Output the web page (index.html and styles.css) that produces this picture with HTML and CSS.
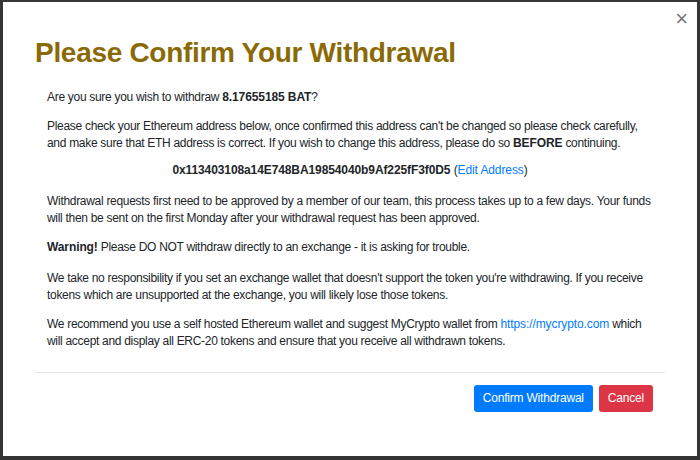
FILE: index.html
```html
<!DOCTYPE html>
<html lang="en">
<head>
  <meta charset="UTF-8">
  <title>Confirm Withdrawal</title>
  <link rel="stylesheet" href="styles.css">
</head>
<body>

<div class="modal">

  <!--关闭按钮-->
  <a class="close" href="javascript:;">&times;</a>

  <h2 class="title">Please Confirm Your Withdrawal</h2>

  <div class="content">
    <p class="first">Are you sure you wish to withdraw <b>8.17655185 BAT</b>?</p>
    <p>Please check your Ethereum address below, once confirmed this address can't be changed so please check carefully, and make sure that ETH address is correct. If you wish to change this address, please do so <b>BEFORE</b> continuing.</p>
    <p class="address"><b>0x113403108a14E748BA19854040b9Af225fF3f0D5</b> (<a href="#">Edit Address</a>)</p>
    <p class="short">Withdrawal requests first need to be approved by a member of our team, this process takes up to a few days. Your funds will then be sent on the first Monday after your withdrawal request has been approved.</p>
    <p><b>Warning!</b> Please DO NOT withdraw directly to an exchange - it is asking for trouble.</p>
    <p class="short">We take no responsibility if you set an exchange wallet that doesn't support the token you're withdrawing. If you receive tokens which are unsupported at the exchange, you will likely lose those tokens.</p>
    <p>We recommend you use a self hosted Ethereum wallet and suggest MyCrypto wallet from <a href="#">https://mycrypto.com</a> which will accept and display all ERC-20 tokens and ensure that you receive all withdrawn tokens.</p>
  </div>

  <!--底部按钮-->
  <div class="footer">
    <a class="btn btn-blue" href="javascript:;">Confirm Withdrawal</a>
    <a class="btn btn-red" href="javascript:;">Cancel</a>
  </div>
</div>

</body>
</html>
```

FILE: styles.css
```css
* {
  margin: 0;
  padding: 0;
  box-sizing: border-box;
}

body {
  background-color: #353535;
  font-family: "Liberation Sans", Arial, sans-serif;
  color: #212529;
}

.modal {
  position: relative;
  width: 694px;
  height: 454px;
  margin: 2px 3px;
  padding: 0 32px;
  background-color: #fff;
}

.close {
  position: absolute;
  top: 6px;
  right: 9px;
  font-size: 22px;
  line-height: 22px;
  color: #777;
  text-decoration: none;
}

.title {
  padding-top: 33px;
  padding-bottom: 18px;
  font-size: 28px;
  line-height: 36px;
  font-weight: bold;
  letter-spacing: -0.3px;
  color: #8a6a06;
}

.content {
  padding: 0 12px;
  font-size: 12px;
  line-height: 17px;
  letter-spacing: -0.3px;
}

.content p {
  margin-bottom: 14px;
}

.content .first,
.content .short {
  margin-bottom: 12px;
}

/*加粗和链接不缩字距，免得和后面的字挤在一起*/
.content b,
.content a {
  letter-spacing: -0.1px;
}

.content a {
  color: #007bff;
  text-decoration: none;
}

.content .address {
  text-align: center;
  margin-top: -4px;
  letter-spacing: -0.1px;
}

/*分割线和按钮  注意margin会和p的合并*/
.footer {
  display: flex;
  justify-content: flex-end;
  gap: 6px;
  margin-top: 22px;
  padding: 12px 12px 0;
  border-top: 1px solid #e5e5e5;
}

.btn {
  display: block;
  height: 27px;
  padding: 0 9px;
  line-height: 27px;
  font-size: 12px;
  letter-spacing: -0.2px;
  color: #fff;
  text-decoration: none;
  border-radius: 3px;
}

.btn-blue {
  background-color: #007bff;
}

.btn-red {
  background-color: #dc3545;
}
```
